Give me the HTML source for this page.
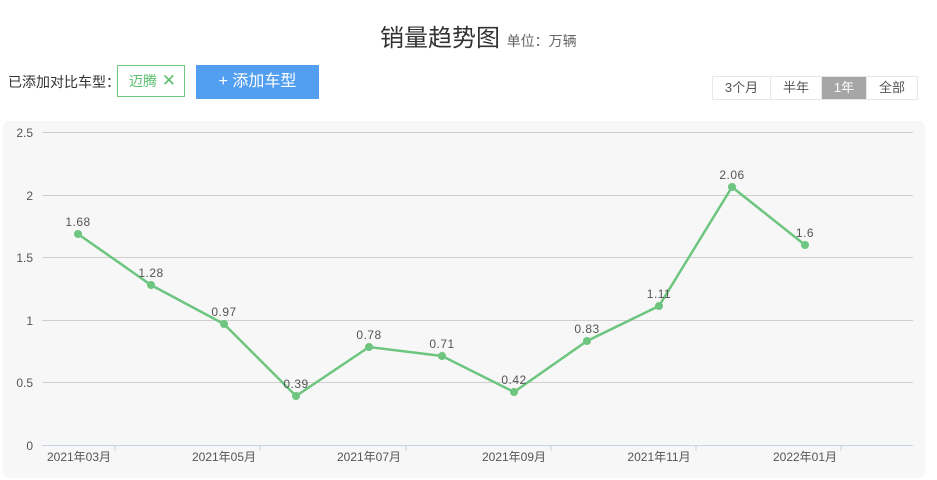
<!DOCTYPE html>
<html><head><meta charset="utf-8"><style>
body{margin:0;width:937px;height:480px;background:#fff;font-family:"Liberation Sans","Noto Sans CJK SC",sans-serif;position:relative;overflow:hidden}
.t{position:absolute;left:380px;top:18px;font-size:24px;color:#333}
.t span{font-size:14px;color:#666}
.lab{position:absolute;left:8px;top:72px;font-size:14px;color:#333}
.tag{position:absolute;left:117px;top:65px;width:68px;height:32px;border:1px solid #6dc57f;box-sizing:border-box;color:#5cbf6f;font-size:14px;line-height:30px;padding-left:11px}
.tag b{position:absolute;right:8px;top:0;font-weight:normal;font-size:17px}
.btn{position:absolute;left:196px;top:65px;width:123px;height:34px;background:#529ef0;color:#fff;font-size:16px;line-height:34px;text-align:center}
.rg{position:absolute;left:712px;top:76px;display:flex;border:1px solid #e8e8e8;height:22px;font-size:13px;color:#555}
.rg div{line-height:22px;text-align:center;border-right:1px solid #e8e8e8}
.rg .on{background:#a6a6a6;color:#fff}
.panel{position:absolute;left:3px;top:121px;width:922px;height:357px;background:#f7f7f7;border-radius:6px}
svg{position:absolute;left:0;top:0}
</style></head><body>
<div class="t">销量趋势图 <span>单位：万辆</span></div>
<div class="lab">已添加对比车型：</div>
<div class="tag">迈腾<b>✕</b></div>
<div class="btn">+ 添加车型</div>
<div class="rg"><div style="width:57px">3个月</div><div style="width:50px">半年</div><div class="on" style="width:44px">1年</div><div style="border:none;width:50px">全部</div></div>
<div class="panel"></div>
<svg width="937" height="480" font-family="Liberation Sans, Noto Sans CJK SC, sans-serif" font-size="12">
<g stroke="#cfcfcf" stroke-width="1">
<line x1="42" x2="913" y1="132.5" y2="132.5"/><line x1="42" x2="913" y1="195.5" y2="195.5"/><line x1="42" x2="913" y1="257.5" y2="257.5"/><line x1="42" x2="913" y1="320.5" y2="320.5"/><line x1="42" x2="913" y1="382.5" y2="382.5"/>
</g>
<line x1="42" x2="913" y1="445.5" y2="445.5" stroke="#c8d3e3"/>
<g stroke="#c8d3e3"><line x1="115" x2="115" y1="445" y2="451"/><line x1="260" x2="260" y1="445" y2="451"/><line x1="406" x2="406" y1="445" y2="451"/><line x1="551" x2="551" y1="445" y2="451"/><line x1="696" x2="696" y1="445" y2="451"/><line x1="841" x2="841" y1="445" y2="451"/></g>
<g fill="#555" text-anchor="end"><text x="33" y="137">2.5</text><text x="33" y="200">2</text><text x="33" y="262">1.5</text><text x="33" y="325">1</text><text x="33" y="387">0.5</text><text x="33" y="450">0</text></g>
<g fill="#555" text-anchor="middle"><text x="79" y="461">2021年03月</text><text x="224" y="461">2021年05月</text><text x="369" y="461">2021年07月</text><text x="514" y="461">2021年09月</text><text x="659" y="461">2021年11月</text><text x="805" y="461">2022年01月</text></g>
<polyline fill="none" stroke="#6dc57f" stroke-width="2.5" points="78,234 151,285 224,324 296,396 369,347 442,356 514,392 587,341 659,306 732,187 805,245"/>
<g fill="#6dc57f"><circle cx="78" cy="234" r="4"/><circle cx="151" cy="285" r="4"/><circle cx="224" cy="324" r="4"/><circle cx="296" cy="396" r="4"/><circle cx="369" cy="347" r="4"/><circle cx="442" cy="356" r="4"/><circle cx="514" cy="392" r="4"/><circle cx="587" cy="341" r="4"/><circle cx="659" cy="306" r="4"/><circle cx="732" cy="187" r="4"/><circle cx="805" cy="245" r="4"/></g>
<g fill="#555" text-anchor="middle" letter-spacing="0.5"><text x="78" y="226">1.68</text><text x="151" y="277">1.28</text><text x="224" y="316">0.97</text><text x="296" y="388">0.39</text><text x="369" y="339">0.78</text><text x="442" y="348">0.71</text><text x="514" y="384">0.42</text><text x="587" y="333">0.83</text><text x="659" y="298">1.11</text><text x="732" y="179">2.06</text><text x="805" y="237">1.6</text></g>
</svg>
</body></html>
